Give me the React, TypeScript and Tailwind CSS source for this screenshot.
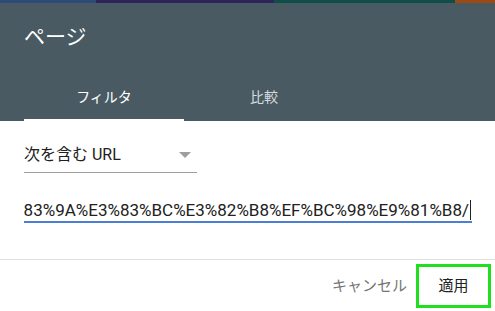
const font = { fontFamily: "Roboto, 'Noto Sans CJK JP', sans-serif" };

const url =
  "https://example.com/%E3%83%9A%E3%83%BC%E3%82%B8%E3%83%9A%E3%83%BC%E3%82%B8%EF%BC%98%E9%81%B8/";

export default function App() {
  return (
    <div className="relative h-[311px] w-[495px] overflow-hidden bg-white" style={font}>
      <div className="flex h-[3px]">
        <div className="w-[96px] bg-[#2f4a7a]" />
        <div className="w-[178px] bg-[#2d2457]" />
        <div className="w-[181px] bg-[#0f4d48]" />
        <div className="flex-1 bg-[#9a4a12]" />
      </div>
      <div className="bg-[#4a5a63] text-white">
        <div className="px-6 pt-[20px] text-[21px] leading-[28px]">ページ</div>
        <div className="mt-[36px] flex px-6">
          <div className="flex w-[160px] flex-col items-center">
            <span className="text-[14px] leading-[20px] text-white">フィルタ</span>
            <div className="mt-[12px] h-[2px] w-full bg-white" />
          </div>
          <div className="flex w-[160px] flex-col items-center">
            <span className="text-[14px] leading-[20px] text-[#d6dcdf]">比較</span>
            <div className="mt-[12px] h-[2px] w-full" />
          </div>
        </div>
      </div>
      <div className="px-6">
        <div className="mt-[23px] flex w-[173px] items-center justify-between border-b border-[#9e9e9e] pb-[6px]">
          <span className="text-[16px] leading-[22px] text-[#212121]">次を含む URL</span>
          <svg width="12" height="6" viewBox="0 0 12 6" className="mr-[6px]">
            <path d="M0 0h12L6 6z" fill="#9e9e9e" />
          </svg>
        </div>
        <div className="mt-[26px] flex w-[448px] items-center justify-end overflow-hidden border-b-2 border-[#4a7fd4]">
          <span className="whitespace-nowrap text-[17px] leading-[22px] text-[#212121]">{url}</span>
          <div className="ml-[1px] mr-[1px] h-[20px] w-px shrink-0 bg-[#212121]" />
        </div>
      </div>
      <div className="mt-[36px] flex items-center justify-end gap-[9px] border-t border-[#e0e0e0] px-1 pt-[4px]">
        <button className="text-[15px] leading-[20px] text-[#757575]">キャンセル</button>
        <button className="flex h-[44px] w-[75px] items-center justify-center border-[3px] border-[#1fe01f] text-[15px] text-[#212121]">
          適用
        </button>
      </div>
    </div>
  );
}
